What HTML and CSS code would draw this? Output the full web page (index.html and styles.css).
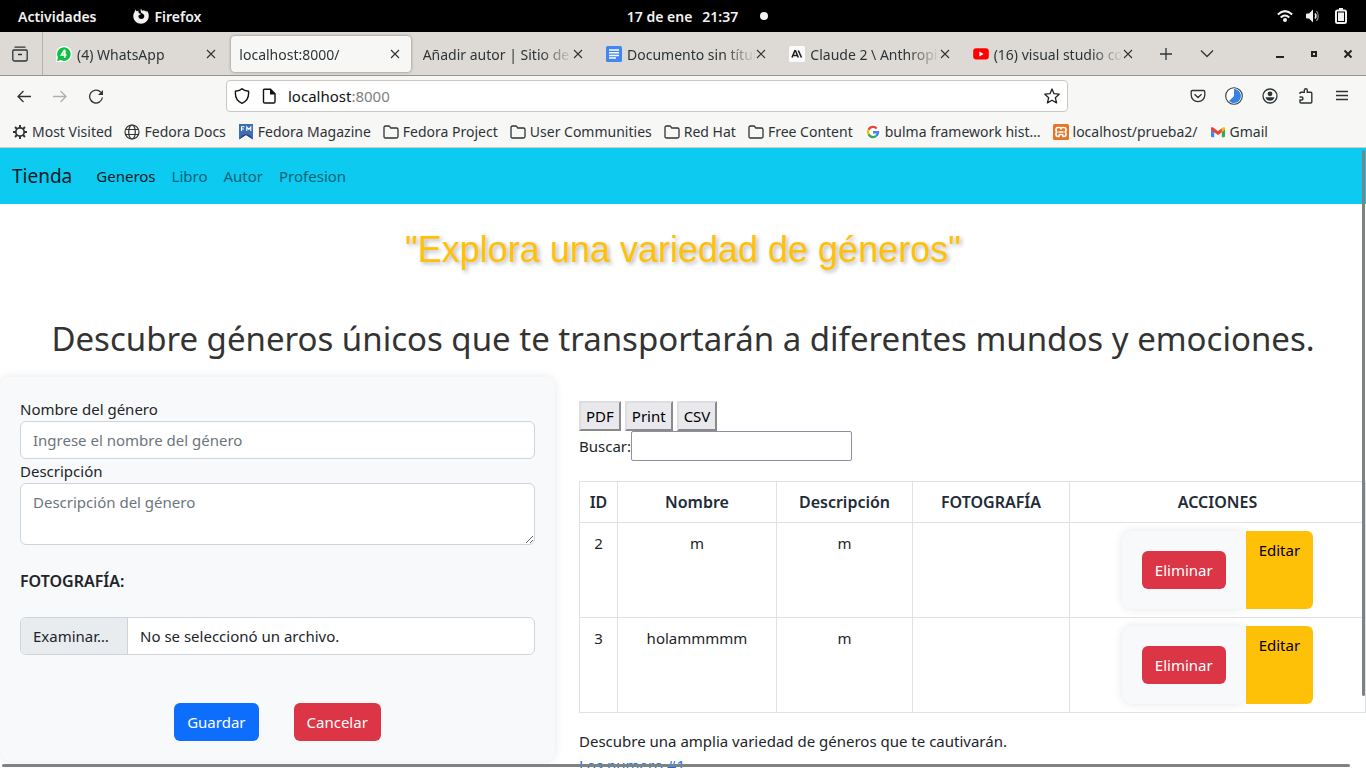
FILE: index.html
```html
<!DOCTYPE html>
<html lang="es">
<head>
<meta charset="utf-8">
<title>Tienda - Generos</title>
<link rel="stylesheet" href="styles.css">
</head>
<body>
<svg class="defs" aria-hidden="true">
  <symbol id="folder" viewBox="0 0 16 16"><path d="M1 12.5V3.500q0-1.500 1.500-1.500h3q.8 0 1.300.7l.9 1.300h5.800q1.500 0 1.500 1.500v7q0 1.500-1.500 1.500h-11Q1 14 1 12.500z" fill="none" stroke="currentColor" stroke-width="1.300"/></symbol>
  <symbol id="close" viewBox="0 0 10 10"><path d="M1 1l8 8M9 1L1 9" fill="none" stroke="currentColor" stroke-width="1.100"/></symbol>
</svg>

<header class="desktop-bar">
  <div class="desktop-left">
    <span>Actividades</span>
    <span class="app-name">
      <svg class="icon" viewBox="0 0 16 16"><path d="M8 0.500l1 2.200C12 2 13 3 13.300 4.200l.5-1.700C15.500 4.500 16 6.500 15.700 8.800 15.200 13 12 15.700 8 15.700S.5 12.700.3 8.500C.2 6.500.8 5 1.800 3.500l.8-2 .9 1.800 2-.5C5.200 4 5.500 5 6.500 5.500L8 5.800C7.500 7 6 7 5.500 7.500 5 9.500 6.500 11 8.300 11c2 0 3.200-1.500 3-3.300C11 6 9.500 5.500 8.500 5 7.500 4 7.300 2 8 .5z" fill="#f2f2f2"/></svg>
      Firefox
    </span>
  </div>
  <div class="desktop-clock"><span class="date"><span>17 de ene</span><span>21:37</span></span><span class="notice-dot"></span></div>
  <div class="desktop-right">
    <svg class="icon" viewBox="0 0 16 16"><path d="M0.800 6.500Q8-.2 15.200 6.500M3.700 9.500Q8 5.500 12.300 9.500" fill="none" stroke="#f2f2f2" stroke-width="2"/><circle cx="8" cy="12" r="2" fill="#f2f2f2"/></svg>
    <svg class="icon" viewBox="0 0 16 16"><path d="M2 5.500h2L8 1.500v13L4 10.500H2q-1 0-1-1v-3q0-1 1-1z" fill="#f2f2f2"/><path d="M10 5.500q2 2.500 0 5" fill="none" stroke="#f2f2f2" stroke-width="1.500"/><path d="M11.500 3q3.500 5 0 10" fill="none" stroke="#8a8a8a" stroke-width="1.300"/></svg>
    <svg class="icon battery" viewBox="0 0 16 16"><path d="M6 0h4v1.500h1.500Q14 1.500 14 4v9.500q0 2.500-2.500 2.500h-7Q2 16 2 13.500V4q0-2.500 2.500-2.500H6z" fill="#f2f2f2"/><rect x="4.500" y="4" width="7" height="9.500" fill="none" stroke="#000" stroke-width="1"/></svg>
  </div>
</header>

<nav class="tab-strip" aria-label="Pestañas">
  <button class="view-button" aria-label="Firefox View"><svg class="icon" viewBox="0 0 16 16"><path d="M2.500 1.200h11M1.800 4h12.400q1 0 1 1v8q0 2-2 2H2.800q-2 0-2-2V5q0-1 1-1zM6 8.500h4" fill="none" stroke="currentColor" stroke-width="1.300"/></svg></button>
  <div class="tabs">
    <div class="tab"><svg class="icon" viewBox="0 0 16 16"><path d="M0 16V8a8 8 0 1 1 8 8z" fill="#fff"/><path d="M1 15.200L2 11.500a6.800 6.800 0 1 1 2.700 2.600z" fill="#0fc143"/><path d="M8.800 3.800L5.500 9h5M8.800 4v7.700" fill="none" stroke="#fff" stroke-width="1.700"/></svg><span class="tab-title">(4) WhatsApp</span><button aria-label="Cerrar"><svg><use href="#close"/></svg></button></div>
    <div class="tab tab-active"><span class="tab-title">localhost:8000/</span><button aria-label="Cerrar"><svg><use href="#close"/></svg></button></div>
    <div class="tab"><span class="tab-title">Añadir autor | Sitio de a</span><button aria-label="Cerrar"><svg><use href="#close"/></svg></button></div>
    <div class="tab"><svg class="icon" viewBox="0 0 16 16"><rect width="16" height="16" rx="1.500" fill="#4285f4"/><path d="M3 4h10M3 6.700h10M3 9.400h10M3 12.100h7" stroke="#fff" stroke-width="1.500"/></svg><span class="tab-title">Documento sin títul</span><button aria-label="Cerrar"><svg><use href="#close"/></svg></button></div>
    <div class="tab"><svg class="icon" viewBox="0 0 16 16"><rect width="16" height="16" rx="1.500" fill="#fafafa"/><path d="M3 11.500L5.800 4.800h.7L9.300 11.500M4.200 9.500h4M9.300 4.500l3.200 7" fill="none" stroke="#222" stroke-width="1.600"/></svg><span class="tab-title">Claude 2 \ Anthropi</span><button aria-label="Cerrar"><svg><use href="#close"/></svg></button></div>
    <div class="tab"><svg class="icon" viewBox="0 0 16 16"><rect y="2.300" x=".2" width="15.600" height="11.200" rx="3" fill="#f00"/><path d="M6.400 5.500v4.900L10.600 8z" fill="#fff"/></svg><span class="tab-title">(16) visual studio co</span><button aria-label="Cerrar"><svg><use href="#close"/></svg></button></div>
  </div>
  <div class="tab-tools">
    <button aria-label="Nueva pestaña"><svg class="icon" viewBox="0 0 16 16"><path d="M2 8h12M8 2v12" stroke="currentColor" stroke-width="1.300"/></svg></button>
    <button aria-label="Listar pestañas"><svg class="icon" viewBox="0 0 16 16"><path d="M2 4.500l6 6 6-6" fill="none" stroke="currentColor" stroke-width="1.300"/></svg></button>
  </div>
  <div class="window-tools">
    <button aria-label="Minimizar"><svg class="icon" viewBox="0 0 16 16"><path d="M4 11h8" stroke="#222" stroke-width="2"/></svg></button>
    <button aria-label="Maximizar"><svg class="icon" viewBox="0 0 16 16"><rect x="6" y="6" width="4" height="4" fill="none" stroke="#222" stroke-width="2"/></svg></button>
    <button aria-label="Cerrar ventana"><svg class="icon" viewBox="0 0 16 16"><path d="M4.500 4.500l7 7M11.500 4.500l-7 7" stroke="#222" stroke-width="2"/></svg></button>
  </div>
</nav>

<div class="toolbar">
  <div class="tool-group">
    <button aria-label="Atrás"><svg class="icon" viewBox="0 0 16 16"><path d="M15 8.500H2M7.500 3L2 8.500 7.500 14" fill="none" stroke="currentColor" stroke-width="1.300"/></svg></button>
    <button aria-label="Adelante" disabled><svg class="icon" viewBox="0 0 16 16"><path d="M1 8.500h13M8.500 3L14 8.500 8.500 14" fill="none" stroke="currentColor" stroke-width="1.300"/></svg></button>
    <button aria-label="Recargar"><svg class="icon" viewBox="0 0 16 16"><path d="M12.800 4.300A6.400 6.400 0 1 0 14.400 9.500" fill="none" stroke="currentColor" stroke-width="1.300"/><path d="M15 2v5H10z" fill="currentColor"/></svg></button>
  </div>
  <div class="url-box">
    <svg class="icon" viewBox="0 0 16 16"><path d="M8 .8Q10 2.700 14.500 3.200 15.500 12 8 15.300.5 12 1.500 3.200 6 2.700 8 .8z" fill="none" stroke="currentColor" stroke-width="1.400"/></svg>
    <svg class="icon" viewBox="0 0 16 16"><path d="M3.500 1.200h6L14 5.700v8q0 1.300-1.300 1.300H3.800q-1.300 0-1.300-1.300V2.500q0-1.300 1-1.300z" fill="none" stroke="currentColor" stroke-width="1.400"/><path d="M9 1v5.500h5.300z" fill="currentColor"/></svg>
    <span class="url" role="textbox" aria-label="Dirección">localhost<span class="url-port">:8000</span></span>
    <button aria-label="Marcador"><svg class="icon" viewBox="0 0 16 16"><path d="M8 1l2 4.700 5.200.5-3.900 3.500 1.300 5.200L8 12.200l-4.600 2.700 1.300-5.200L.8 6.200 6 5.700z" fill="none" stroke="#222" stroke-width="1.300" stroke-linejoin="round"/></svg></button>
  </div>
  <div class="tool-group">
    <button aria-label="Pocket"><svg class="icon" viewBox="0 0 16 16"><path d="M2.500 2.500h11q1.300 0 1.300 1.300V7c0 4-3 6.600-6.800 6.600S1.200 11 1.200 7V3.800q0-1.300 1.300-1.300zM4.500 6.300L8 9.500l3.500-3.200" fill="none" stroke="currentColor" stroke-width="1.300"/></svg></button>
    <button aria-label="Progreso"><svg class="icon-large" viewBox="0 0 18 18"><circle cx="9" cy="9" r="8.300" fill="#fff" stroke="#33373a" stroke-width="1.100"/><path d="M9 9V2a7 7 0 1 1-5 12z" fill="#3584e4"/></svg></button>
    <button aria-label="Cuenta"><svg class="icon" viewBox="0 0 16 16"><circle cx="8" cy="8" r="7" fill="none" stroke="currentColor" stroke-width="1.300"/><circle cx="8" cy="5.800" r="2.400" fill="currentColor"/><path d="M3.500 9.200h9Q11.500 12.700 8 12.700T3.500 9.200z" fill="currentColor"/></svg></button>
    <button aria-label="Extensiones"><svg class="icon" viewBox="0 0 16 16"><path d="M2 6V5.300q0-1 1-1h3.300V2.500q0-1.700 1.500-1.700t1.500 1.700v1.800h3.500q1 0 1 1V14q0 1-1 1H3q-1 0-1-1v-2h1.500q1.500 0 1.500-1.500T3.500 9H1.500" fill="none" stroke="currentColor" stroke-width="1.400"/></svg></button>
    <button aria-label="Menú"><svg class="icon" viewBox="0 0 16 16"><path d="M2 3.500h12M2 7.500h12M2 11.500h12" stroke="currentColor" stroke-width="1.300"/></svg></button>
  </div>
</div>

<nav class="bookmarks" aria-label="Marcadores">
  <a href="#"><svg class="icon" viewBox="0 0 16 16"><circle cx="8" cy="8" r="4.200" fill="none" stroke="currentColor" stroke-width="1.800"/><path d="M8 1v3M8 12v3M1 8h3M12 8h3M3 3l2 2M11 11l2 2M13 3l-2 2M5 11l-2 2" stroke="currentColor" stroke-width="1.900"/></svg>Most Visited</a>
  <a href="#"><svg class="icon" viewBox="0 0 16 16"><g fill="none" stroke="currentColor" stroke-width="1.200"><circle cx="8" cy="8" r="7"/><ellipse cx="8" cy="8" rx="3.300" ry="7"/><path d="M1.500 5.500h13M1.500 10.500h13"/></g></svg>Fedora Docs</a>
  <a href="#"><svg class="icon" viewBox="0 0 16 16"><path d="M1 0h14v15.500L8 11l-7 4.500z" fill="#3c6eb4"/><path d="M1 15.500l3-4 4-1.500 4 1.500 3 4L8 11z" fill="#294172"/><path d="M3.500 7V2.800h3M3.500 5h2.500M8.800 7V3l2 2.300L12.800 3v4" fill="none" stroke="#fff" stroke-width="1.100"/></svg>Fedora Magazine</a>
  <a href="#"><svg class="icon"><use href="#folder"/></svg>Fedora Project</a>
  <a href="#"><svg class="icon"><use href="#folder"/></svg>User Communities</a>
  <a href="#"><svg class="icon"><use href="#folder"/></svg>Red Hat</a>
  <a href="#"><svg class="icon"><use href="#folder"/></svg>Free Content</a>
  <a href="#"><svg class="icon" viewBox="0 0 16 16"><circle cx="8" cy="8" r="8" fill="#fff"/><g fill="none" stroke-width="2.400"><path d="M3.500 5.700A5 5 0 0 1 11.700 4.500" stroke="#ea4335"/><path d="M3.500 5.700A5 5 0 0 0 3.500 10.300" stroke="#fbbc05"/><path d="M3.500 10.300A5 5 0 0 0 11.200 11.900" stroke="#34a853"/><path d="M11.200 11.900A5 5 0 0 0 13 8.200H8" stroke="#4285f4"/></g></svg>bulma framework hist…</a>
  <a href="#"><svg class="icon" viewBox="0 0 16 16"><rect width="16" height="16" rx="1.500" fill="#e87424"/><path d="M5 3.500h1.500q1.500 0 1.500 2 0-2 1.500-2H11q2 0 2 2.200Q13 8 11.500 8q1.500 0 1.500 2.300 0 2.200-2 2.200-1.500 0-1.500-2h-3q0 2-1.500 2-2 0-2-2.200Q3 8 4.500 8 3 8 3 5.700q0-2.200 2-2.200zM5.500 8h5" fill="none" stroke="#fff" stroke-width="1.700"/></svg>localhost/prueba2/</a>
  <a href="#"><svg class="icon" viewBox="0 0 16 16"><path d="M1 4v8q0 1.300 1.300 1.300H4.200V6.500z" fill="#4285f4"/><path d="M15 4v8q0 1.300-1.300 1.300h-1.900V6.500z" fill="#34a853"/><path d="M11.800 4.300l1-.9Q15 2.200 15 4.500v1.200l-3.200 2.500z" fill="#fbbc04"/><path d="M1 5.700V4.500q0-2.300 2.200-1.100L8 7.200l3.800-2.900v3.900L8 11 4.200 8.200z" fill="#ea4335"/></svg>Gmail</a>
</nav>

<div class="viewport">
  <nav class="navbar" aria-label="Tienda">
    <a class="brand" href="#">Tienda</a>
    <a class="nav-link nav-current" href="#">Generos</a>
    <a class="nav-link" href="#">Libro</a>
    <a class="nav-link" href="#">Autor</a>
    <a class="nav-link" href="#">Profesion</a>
  </nav>
  <main>
    <h1>"Explora una variedad de géneros"</h1>
    <h2>Descubre géneros únicos que te transportarán a diferentes mundos y emociones.</h2>
    <div class="columns">
      <form class="card genre-form">
        <label for="nombre">Nombre del género</label>
        <input class="control" id="nombre" type="text" placeholder="Ingrese el nombre del género">
        <label for="descripcion">Descripción</label>
        <textarea class="control" id="descripcion" rows="2" placeholder="Descripción del género"></textarea>
        <label class="photo-label" for="foto">FOTOGRAFÍA:</label>
        <label class="file-picker">
          <input id="foto" type="file">
          <span class="file-button">Examinar…</span>
          <span class="file-name">No se seleccionó un archivo.</span>
        </label>
        <div class="form-actions">
          <button class="btn btn-primary" type="button">Guardar</button>
          <button class="btn btn-danger" type="button">Cancelar</button>
        </div>
      </form>
      <section class="listing">
        <div class="export-buttons"><button>PDF</button><button>Print</button><button>CSV</button></div>
        <div class="search"><label for="buscar">Buscar:</label><input id="buscar" type="search"></div>
        <table>
          <colgroup><col class="col-id"><col class="col-name"><col class="col-text"><col class="col-photo"><col class="col-actions"></colgroup>
          <thead><tr><th>ID</th><th>Nombre</th><th>Descripción</th><th>FOTOGRAFÍA</th><th>ACCIONES</th></tr></thead>
          <tbody>
            <tr><td>2</td><td>m</td><td>m</td><td></td><td><div class="row-actions"><form class="card"><button class="btn btn-danger" type="button">Eliminar</button></form><a class="btn btn-warning" href="#">Editar</a></div></td></tr>
            <tr><td>3</td><td>holammmmm</td><td>m</td><td></td><td><div class="row-actions"><form class="card"><button class="btn btn-danger" type="button">Eliminar</button></form><a class="btn btn-warning" href="#">Editar</a></div></td></tr>
          </tbody>
        </table>
        <p>Descubre una amplia variedad de géneros que te cautivarán.</p>
        <a class="more-link" href="#">Los numero #1</a>
      </section>
    </div>
  </main>
  <div class="scrollbar scrollbar-y"></div>
  <div class="scrollbar scrollbar-x"></div>
</div>
</body>
</html>
```
FILE: styles.css
```css
*, *::before, *::after { box-sizing: border-box; }

body {
  margin: 0;
  height: 100vh;
  display: flex;
  flex-direction: column;
  overflow: hidden;
  font-family: "Noto Sans", sans-serif;
  font-size: 14px;
  color: #2e3436;
  background: #fff;
}

button, input, textarea { font: inherit; color: inherit; }
a { color: inherit; text-decoration: none; }
.defs { position: absolute; width: 0; height: 0; }
.icon { width: 16px; height: 16px; flex: none; display: block; }
.icon-large { width: 18px; height: 18px; display: block; }

/* Desktop bar */
.desktop-bar {
  display: grid;
  grid-template-columns: 1fr auto 1fr;
  align-items: center;
  height: 32px;
  flex: none;
  padding: 0 17px 0 18px;
  background: #000;
  color: #f2f2f2;
  font-weight: 600;
}
.desktop-left, .app-name, .desktop-clock, .desktop-right { display: flex; align-items: center; }
.desktop-left { gap: 36px; }
.app-name { gap: 6px; }
.desktop-clock { gap: 22px; padding-left: 28px; }
.date { display: flex; gap: 10px; }
.notice-dot { width: 8px; height: 8px; border-radius: 50%; background: #f2f2f2; }
.desktop-right { justify-content: flex-end; gap: 12px; }

/* Tabs */
.tab-strip {
  display: flex;
  align-items: stretch;
  height: 44px;
  flex: none;
  background: #dddad6;
  border-bottom: 1px solid #979593;
}
.tab-strip button, .toolbar button {
  display: flex;
  align-items: center;
  justify-content: center;
  padding: 0;
  border: 0;
  background: none;
}
.tab-strip .view-button { width: 43px; padding-right: 2px; border-right: 1px solid #b4b1ae; }
.tabs { flex: 1; min-width: 0; display: flex; padding-left: 5px; }
.tab {
  flex: 1;
  min-width: 0;
  display: flex;
  align-items: center;
  margin: 4px 4px 3px 0;
  padding: 0 11px 0 8px;
  border-radius: 4px;
}
.tab .icon { margin-right: 5px; }
.tab-active { background: #f7f7f6; box-shadow: 0 0 3px rgba(0, 0, 0, .45); }
.tab-title {
  flex: 1;
  min-width: 0;
  overflow: hidden;
  white-space: nowrap;
  mask-image: linear-gradient(to left, transparent, #000 32px);
}
.tab button, .tab button svg { width: 10px; height: 10px; flex: none; }
.tab-tools { display: flex; gap: 16px; padding-left: 5px; }
.tab-tools button { width: 25px; }
.window-tools { display: flex; gap: 18px; padding: 0 10px 0 53px; }
.window-tools button { width: 16px; }

/* Toolbar */
.toolbar {
  display: flex;
  align-items: center;
  height: 40px;
  flex: none;
  padding: 0 6px;
  background: #f7f7f6;
}
.tool-group { display: flex; }
.tool-group button { width: 36px; height: 32px; }
.toolbar button:disabled { color: #aeb0b0; }
.url-box {
  flex: 1;
  display: flex;
  align-items: center;
  gap: 11px;
  height: 32px;
  margin: 0 112px;
  padding: 0 7px;
  border: 1px solid #cdc7c2;
  border-radius: 4px;
  background: #fff;
  color: #111;
  font-size: 15px;
}
.url { flex: 1; }
.url-port { color: #808080; }

/* Bookmarks */
.bookmarks {
  display: flex;
  gap: 12px;
  align-items: center;
  height: 32px;
  flex: none;
  padding: 0 12px;
  background: #f7f7f6;
  border-bottom: 1px solid #d0cdca;
  white-space: nowrap;
}
.bookmarks a { display: flex; align-items: center; gap: 4px; }

/* Page */
.viewport {
  position: relative;
  flex: 1;
  min-height: 0;
  overflow: hidden;
  font-size: 15px;
  line-height: 24px;
  color: #212529;
}
.navbar {
  display: flex;
  align-items: center;
  height: 56px;
  padding: 0 12px;
  background: #0dcaf0;
}
.brand { margin-right: 16px; font-size: 19px; color: #02191e; }
.nav-link { padding: 8px; color: #066476; }
.nav-current { color: #02191e; }

h1, h2 { margin: 0; font-weight: 400; text-align: center; white-space: nowrap; }
h1 {
  padding: 24px 0;
  font-family: "Liberation Sans", Arial, sans-serif;
  font-size: 36px;
  line-height: 44px;
  color: #ffc107;
  text-shadow: 2px 2px 4px rgba(0, 0, 0, .3);
}
h2 { padding: 19px 0 14px; font-size: 33px; line-height: 48px; color: #333; }

.columns { display: grid; grid-template-columns: 555fr 811fr; align-items: start; }
.card {
  padding: 20px;
  border-radius: 10px;
  background: #f8f9fa;
  box-shadow: 0 0 10px rgba(0, 0, 0, .1);
}
.genre-form { display: flex; flex-direction: column; }
.control {
  display: block;
  width: 100%;
  padding: 6px 12px;
  border: 1px solid #ced4da;
  border-radius: 6px;
  background: #fff;
  line-height: 24px;
}
.control::placeholder { color: #6c757d; opacity: 1; }
.photo-label { margin: 24px 0; font-size: 16px; font-weight: 600; }
.file-picker {
  position: relative;
  display: flex;
  overflow: hidden;
  border: 1px solid #ced4da;
  border-radius: 6px;
  background: #fff;
}
.file-picker input { position: absolute; inset: 0; opacity: 0; }
.file-button {
  min-width: 107px;
  padding: 6px 12px;
  background: #e9ecef;
  border-right: 1px solid #ced4da;
}
.file-name { padding: 6px 12px; }
.form-actions { display: flex; justify-content: center; gap: 35px; margin-top: 48px; }
.btn {
  padding: 7px 13px;
  border: 0;
  border-radius: 6px;
  color: #fff;
  line-height: 24px;
}
.btn-primary { background: #0d6efd; }
.btn-danger { background: #dc3545; }
.btn-warning { background: #ffc107; color: #000; border-radius: 0 6px 6px 0; }

.listing { padding: 24px 0 0 24px; }
.export-buttons { display: flex; gap: 4px; }
.export-buttons button {
  height: 30px;
  padding: 0 5px;
  border: 2px outset #dedede;
  background: #e9e9ed;
  color: #000;
}
.search { display: flex; align-items: center; margin-bottom: 20px; }
.search input {
  width: 221px;
  height: 30px;
  border: 1px solid #8f8f9d;
  border-radius: 2px;
  background: #fff;
  appearance: none;
}
table { width: 100%; table-layout: fixed; border-collapse: collapse; text-align: center; }
th, td { padding: 8px; border: 1px solid #dee2e6; vertical-align: top; }
th { padding: 8px 0; font-size: 16px; font-weight: 600; color: #212b37; }
.col-id { width: 38px; }
.col-name { width: 159px; }
.col-text { width: 136px; }
.col-photo { width: 157px; }
.row-actions { display: flex; justify-content: center; }
p { margin: 16px 0 0; }
.more-link { color: #0d6efd; text-decoration: underline; }

.scrollbar { position: absolute; border-radius: 2px; background: #7e8282; }
.scrollbar-y { top: 2px; right: 1px; width: 3px; height: 88%; }
.scrollbar-x { left: 2px; right: 16px; bottom: 1px; height: 3px; }
```
